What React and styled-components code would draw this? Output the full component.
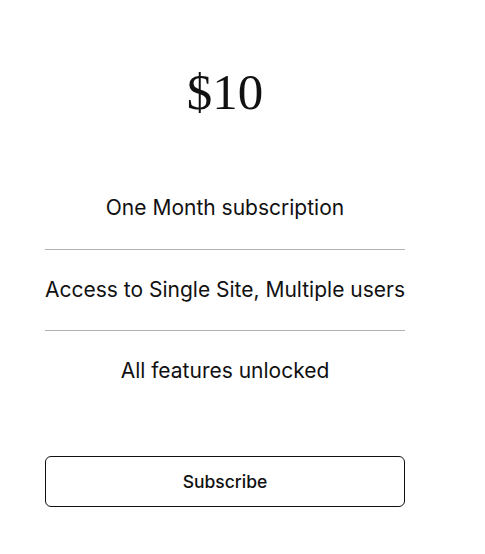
import React from 'react';
import styled, { createGlobalStyle } from 'styled-components';

const GlobalStyle = createGlobalStyle`
  body {
    margin: 0;
    background: #ffffff;
    font-family: Inter, "Liberation Sans", sans-serif;
    color: #111111;
  }
`;

const PlanCard = styled.div`
  width: 360px;
  margin-left: 45px;
  display: flex;
  flex-direction: column;
  align-items: stretch;
`;

const Price = styled.div`
  height: 169px;
  display: flex;
  align-items: center;
  justify-content: center;
  padding-top: 14px;
  box-sizing: border-box;
  font-family: "Liberation Serif", serif;
  font-size: 51px;
  color: #111111;
`;

const FeatureList = styled.ul`
  list-style: none;
  margin: 0;
  padding: 0;
`;

const Feature = styled.li`
  height: ${(p) => (p.first ? '77px' : '79px')};
  padding-bottom: ${(p) => (p.first ? '3px' : '1px')};
  display: flex;
  align-items: center;
  justify-content: center;
  font-size: 21px;
  white-space: nowrap;
  border-top: ${(p) => (p.first ? 'none' : '1px solid #b3b3b3')};
`;

const SubscribeButton = styled.button`
  margin-top: 45px;
  height: 51px;
  border: 1px solid #111111;
  border-radius: 6px;
  background: #ffffff;
  font-family: Inter, "Liberation Sans", sans-serif;
  font-size: 17.5px;
  font-weight: 500;
  color: #111111;
  cursor: pointer;
`;

const features = [
  'One Month subscription',
  'Access to Single Site, Multiple users',
  'All features unlocked',
];

const App = () => {
  return (
    <>
      <GlobalStyle />
      <PlanCard>
        <Price>$10</Price>
        <FeatureList>
          {features.map((f, i) => (
            <Feature key={f} first={i === 0}>
              {f}
            </Feature>
          ))}
        </FeatureList>
        <SubscribeButton>Subscribe</SubscribeButton>
      </PlanCard>
    </>
  );
};

export default App;
